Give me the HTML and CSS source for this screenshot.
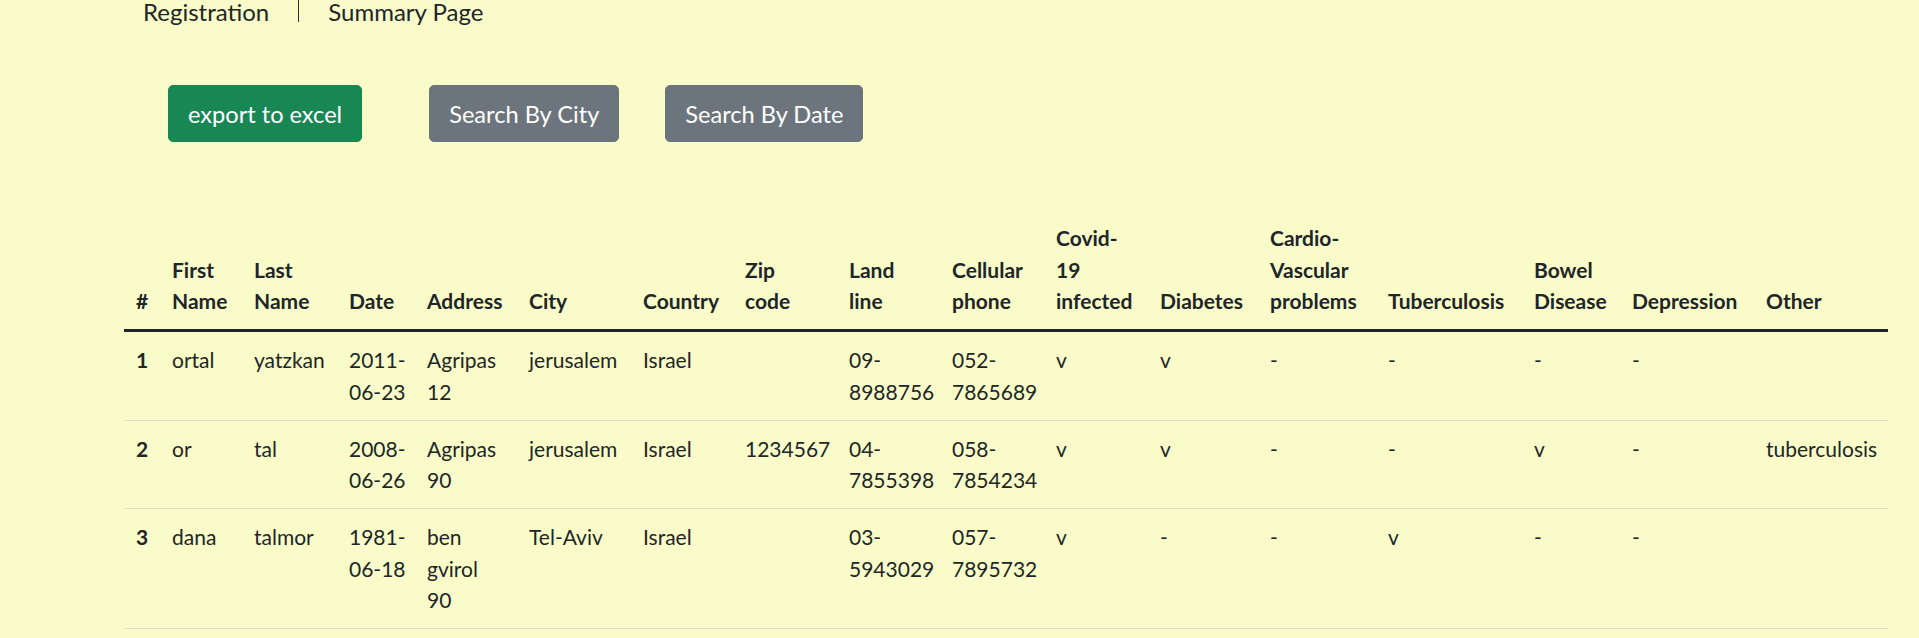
FILE: index.html
```html
<!DOCTYPE html>
<html lang="en">
<head>
<meta charset="utf-8">
<title>Summary Page</title>
<link rel="stylesheet" href="styles.css">
</head>
<body>
<nav class="topnav">
  <a class="nav-link" href="#">Registration</a>
  <span class="nav-sep"></span>
  <a class="nav-link" href="#">Summary Page</a>
</nav>
<div class="actions">
  <button class="btn btn-success btn-export">export to excel</button>
  <button class="btn btn-secondary btn-city">Search By City</button>
  <button class="btn btn-secondary">Search By Date</button>
</div>
<table class="data-table">
  <colgroup>
    <col class="c-num">
    <col class="c-first">
    <col class="c-last">
    <col class="c-date">
    <col class="c-address">
    <col class="c-city">
    <col class="c-country">
    <col class="c-zip">
    <col class="c-land">
    <col class="c-cell">
    <col class="c-covid">
    <col class="c-diab">
    <col class="c-cardio">
    <col class="c-tuber">
    <col class="c-bowel">
    <col class="c-depr">
    <col class="c-other">
  </colgroup>
  <thead>
    <tr>
      <th>#</th>
      <th>First Name</th>
      <th>Last Name</th>
      <th>Date</th>
      <th>Address</th>
      <th>City</th>
      <th>Country</th>
      <th>Zip code</th>
      <th>Land line</th>
      <th>Cellular phone</th>
      <th>Covid-19 infected</th>
      <th>Diabetes</th>
      <th>Cardio-Vascular problems</th>
      <th>Tuberculosis</th>
      <th>Bowel Disease</th>
      <th>Depression</th>
      <th>Other</th>
    </tr>
  </thead>
  <tbody>
    <tr>
      <th class="row-num">1</th>
      <td>ortal</td>
      <td>yatzkan</td>
      <td>2011-<span class="nw">06-23</span></td>
      <td>Agripas 12</td>
      <td>jerusalem</td>
      <td>Israel</td>
      <td></td>
      <td>09-8988756</td>
      <td>052-7865689</td>
      <td>v</td>
      <td>v</td>
      <td>-</td>
      <td>-</td>
      <td>-</td>
      <td>-</td>
      <td></td>
    </tr>
    <tr>
      <th class="row-num">2</th>
      <td>or</td>
      <td>tal</td>
      <td>2008-<span class="nw">06-26</span></td>
      <td>Agripas 90</td>
      <td>jerusalem</td>
      <td>Israel</td>
      <td>1234567</td>
      <td>04-7855398</td>
      <td>058-7854234</td>
      <td>v</td>
      <td>v</td>
      <td>-</td>
      <td>-</td>
      <td>v</td>
      <td>-</td>
      <td>tuberculosis</td>
    </tr>
    <tr>
      <th class="row-num">3</th>
      <td>dana</td>
      <td>talmor</td>
      <td>1981-<span class="nw">06-18</span></td>
      <td>ben gvirol 90</td>
      <td>Tel-Aviv</td>
      <td>Israel</td>
      <td></td>
      <td>03-5943029</td>
      <td>057-7895732</td>
      <td>v</td>
      <td>-</td>
      <td>-</td>
      <td>v</td>
      <td>-</td>
      <td>-</td>
      <td></td>
    </tr>
  </tbody>
</table>
</body>
</html>
```

FILE: styles.css
```css
html, body {
  margin: 0;
  padding: 0;
}

body {
  background: #f9fcc8;
  color: #212529;
  font-family: Lato, "Liberation Sans", sans-serif;
  overflow: hidden;
}

.topnav {
  display: flex;
  align-items: flex-start;
  gap: 29px;
  padding-left: 143px;
  font-size: 24px;
  line-height: 24px;
  height: 24px;
}

.nav-link {
  color: #212529;
  text-decoration: none;
}

.nav-sep {
  width: 1px;
  height: 22px;
  background: #2b2f33;
}

.actions {
  display: flex;
  margin-top: 61px;
  padding-left: 168px;
}

.btn {
  font-family: Lato, "Liberation Sans", sans-serif;
  font-size: 23.6px;
  line-height: 36px;
  padding: 9.5px 19px;
  border: 1px solid transparent;
  border-radius: 5px;
  color: #fff;
  cursor: pointer;
}

.btn-success {
  background: #198754;
  border-color: #198754;
}

.btn-secondary {
  background: #6c757d;
  border-color: #6c757d;
}

.btn-export {
  margin-right: 67px;
}

.btn-city {
  margin-right: 46px;
}

.data-table {
  margin-top: 68px;
  margin-left: 124px;
  width: 1764px;
  table-layout: fixed;
  border-collapse: collapse;
  font-size: 21px;
  line-height: 31.7px;
}

.data-table th,
.data-table td {
  padding: 12px 12px;
  text-align: left;
  vertical-align: top;
  border-bottom: 1px solid #dedfd0;
}

.data-table thead th {
  vertical-align: bottom;
  font-weight: 700;
  border-bottom: 3px solid #212529;
}

.data-table .row-num {
  font-weight: 700;
}

.nw {
  white-space: nowrap;
}

.c-num { width: 36px; }
.c-first { width: 82px; }
.c-last { width: 95px; }
.c-date { width: 78px; }
.c-address { width: 102px; }
.c-city { width: 114px; }
.c-country { width: 102px; }
.c-zip { width: 104px; }
.c-land { width: 103px; }
.c-cell { width: 104px; }
.c-covid { width: 104px; }
.c-diab { width: 110px; }
.c-cardio { width: 118px; }
.c-tuber { width: 146px; }
.c-bowel { width: 98px; }
.c-depr { width: 134px; }
.c-other { width: 134px; }
```
